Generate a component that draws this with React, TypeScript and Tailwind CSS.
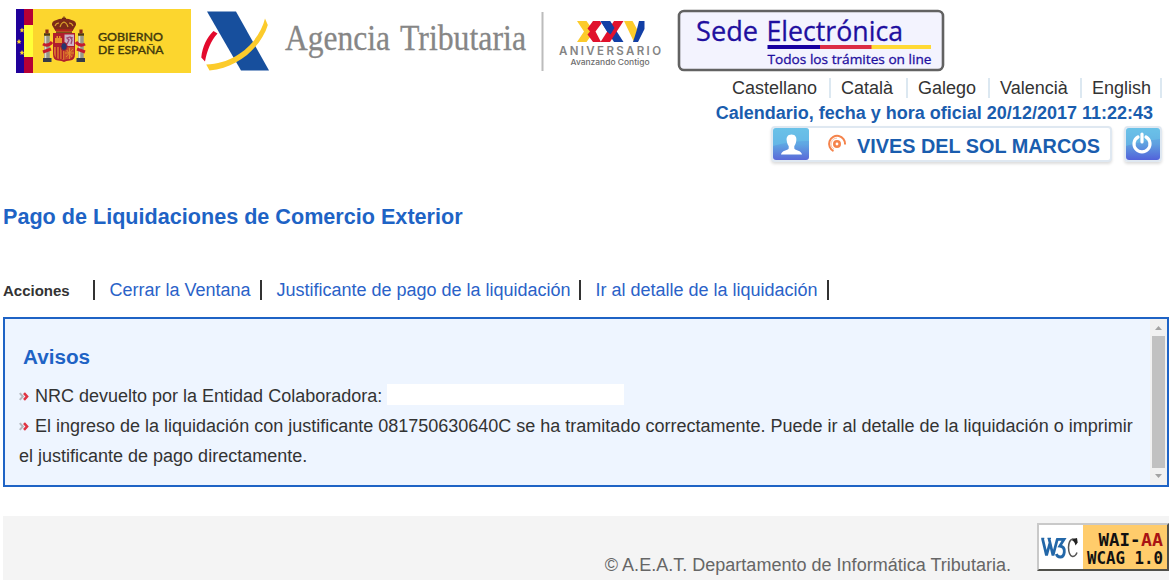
import React from "react";

function GobiernoLogo() {
  return (
    <svg className="block h-16 w-[175px]" viewBox="0 0 175 64">
      <rect width="175" height="64" fill="#fcd62e" />
      <rect width="8" height="64" fill="#20009a" />
      <rect x="8" width="9" height="64" fill="#b50035" />
      <rect x="8" y="16" width="9" height="32" fill="#ffff38" />
      <g fill="#fcd62e">
        <path d="M6 18.500l.8 1.700 1.600.2-1.200 1.200.3 1.800-1.500-.9-1.500.9.300-1.800-1.200-1.200 1.600-.2z" />
        <path d="M3 30l.8 1.700 1.600.2-1.200 1.200.3 1.800-1.500-.9-1.500.9.300-1.800L.6 31.900l1.600-.2z" />
        <path d="M6 41l.8 1.700 1.600.2-1.200 1.200.3 1.800-1.500-.9-1.500.9.300-1.800-1.200-1.200 1.600-.2z" />
      </g>
      {/* crown */}
      <path d="M48 7.500v4M46 9.500h4" stroke="#6b2a12" strokeWidth="1.300" />
      <path d="M39.500 22l-3.500-6q-.5-4 4.500-5 4-2 7.500-1 3.500-1 7.500 1 5 1 4.500 5l-3.500 6z" fill="#7d2a18" />
      <path d="M39 17q1-3 4-3M44 18q1-4 4-5 3 1 4 5M53 14q3 0 4 3" fill="none" stroke="#d9a32c" strokeWidth="1.100" />
      <path d="M40 21.500h16" stroke="#b4231f" strokeWidth="2.400" />
      <path d="M40 23.300h16" stroke="#5b3013" strokeWidth="1" />
      {/* columns */}
      <g>
        <path d="M31 27v22M65 27v22" stroke="#98988a" strokeWidth="5.500" />
        <path d="M29.500 27v22M63.500 27v22" stroke="#dcdccf" strokeWidth="1.500" />
        <path d="M28 25.500h6M62 25.500h6" stroke="#4b3a18" strokeWidth="2.400" />
        <path d="M31 20.500v4M65 20.500v4" stroke="#8e2c18" strokeWidth="3.200" />
        <path d="M27 51h8.500M60.500 51h8.500" stroke="#353b48" strokeWidth="4" />
        <path d="M27 35q5 3 9-2M27 43l8-3M69 35q-5 3-9-2M69 43l-8-3" fill="none" stroke="#c51c2d" strokeWidth="3" />
      </g>
      {/* shield */}
      <path d="M37 24h22v21q0 6-5 6.500-4 0-6 1.500-2-1.500-6-1.500-5-.5-5-6.500z" fill="#b01e2c" />
      <path d="M48.500 25.500h9.500V37h-9.500z" fill="#cdb2c6" />
      <path d="M51 35l2-4-2-2 3-1 2 3-1 4M54 28l3 1" fill="none" stroke="#9b4570" strokeWidth="1.300" />
      <path d="M39 34v-5h1.500v-2h1.500v2h1v-2h1.500v2H46v5z" fill="#e8952c" />
      <path d="M38 38h10v13q-2-1-5-1-5-1-5-6z" fill="#d9762c" />
      <path d="M40.500 38v11M43.500 38v12M46.300 38v12" stroke="#b01e2c" strokeWidth="1.400" />
      <path d="M48 38h10v6q0 5-5 6-3 0-5 1z" fill="#c8492b" />
      <path d="M50 40l6 8M57 40l-7 8M53.500 39v11M49 44h9" stroke="#e08b2c" strokeWidth="1" />
      <ellipse cx="48" cy="37.500" rx="3.200" ry="4" fill="#28356c" stroke="#b01e2c" />
      <g
        fill="#40380d"
        fontFamily="Lato, sans-serif"
        fontSize="12"
        fontWeight="400"
        stroke="#40380d"
        strokeWidth=".4"
      >
        <text x="82" y="32" textLength="65" lengthAdjust="spacingAndGlyphs">GOBIERNO</text>
        <text x="82" y="45" textLength="65.500" lengthAdjust="spacingAndGlyphs">DE ESPAÑA</text>
      </g>
    </svg>
  );
}

function AgenciaLogo() {
  return (
    <svg className="block h-[76px] w-[344px] overflow-visible" viewBox="200 0 344 76">
      <path d="M207 11.500h29L269 70.500h-28z" fill="#174f9d" />
      <path d="M213.500 31l4 2.500c-6.500 7-10.500 17-12.500 28l-3.700-4c1-11 5.700-20 12.200-26.500z" fill="#e30a2d" />
      <path d="M265 18.500l2.800 6.500c-6 20-28 43-58.300 45.500l-3.300-6c31.800-1 53.800-25 58.800-46z" fill="#fccb2b" />
      <g
        fontFamily="Liberation Serif, serif"
        fontSize="35.500"
        fill="#868686"
        stroke="#868686"
        strokeWidth=".3"
      >
        <text x="285" y="49.500" textLength="105" lengthAdjust="spacingAndGlyphs">Agencia</text>
        <text x="400" y="49.500" textLength="126" lengthAdjust="spacingAndGlyphs">Tributaria</text>
      </g>
      <rect x="541.500" y="12" width="2" height="59" fill="#bcbcbc" />
    </svg>
  );
}

function AniversarioLogo() {
  return (
    <svg className="block h-[72px] w-[108px]" viewBox="556 0 108 72">
      <path d="M577 21h9.500l7.500 10.500-7.500 10.500H577l7-10.500z" fill="#fccb2b" />
      <path d="M600 21h-7l-5.500 7.500 2.500 3-2.500 3L593 42h8l-5.500-10.500 6-8z" fill="#e0122d" />
      <path d="M600.500 21h9.500L623.500 42H614z" fill="#123fa5" />
      <path d="M623.500 21H614L600.500 42h9.500z" fill="#e0122d" />
      <path d="M600.500 21h9.500l4.500 7-4 6.500-3.500-3z" fill="#123fa5" />
      <path d="M624 21h8.500l5 9-3.500 12z" fill="#fccb2b" />
      <path d="M636.500 31l2.500-10h5.500v8L638 42h-5z" fill="#123fa5" />
      <text
        x="559"
        y="55.300"
        textLength="102"
        lengthAdjust="spacing"
        fontFamily="Inter, sans-serif"
        fontSize="11.500"
        fontWeight="600"
        fill="#848484"
      >
        ANIVERSARIO
      </text>
      <text
        x="570.500"
        y="65"
        textLength="79"
        lengthAdjust="spacingAndGlyphs"
        fontFamily="Inter, sans-serif"
        fontSize="7.500"
        fontWeight="500"
        fill="#6d6d6d"
      >
        Avanzando Contigo
      </text>
    </svg>
  );
}

function SedeLogo() {
  return (
    <svg className="block h-16 w-[268px]" viewBox="677 9 268 64">
      <rect x="679" y="11" width="264" height="59" rx="5" fill="#f3f3fe" stroke="#626262" strokeWidth="2.600" />
      <g fontFamily="Open Sans, Noto Sans, sans-serif" fill="#1f0f9f" stroke="#1f0f9f">
        <text x="696" y="41" fontSize="26.500" strokeWidth=".3" textLength="62" lengthAdjust="spacingAndGlyphs">
          Sede
        </text>
        <text x="766.500" y="41" fontSize="26.500" strokeWidth=".3" textLength="136.500" lengthAdjust="spacingAndGlyphs">
          Electrónica
        </text>
        <text x="767.500" y="64" fontSize="13.500" strokeWidth=".3" textLength="164" lengthAdjust="spacingAndGlyphs">
          Todos los trámites on line
        </text>
      </g>
      <rect x="767.500" y="45" width="53" height="4" fill="#1600a0" />
      <rect x="820" y="45" width="52" height="4" fill="#dc2d45" />
      <rect x="871.500" y="45" width="59.500" height="4" fill="#ffd935" />
    </svg>
  );
}

function UserIcon() {
  return (
    <svg className="block h-8 w-9" viewBox="0 0 36 32">
      <defs>
        <linearGradient id="user-bg" x1="0" y1="0" x2="0" y2="1">
          <stop offset="0" stopColor="#68b9e6" />
          <stop offset=".5" stopColor="#5fa7e3" />
          <stop offset="1" stopColor="#5a69d8" />
        </linearGradient>
      </defs>
      <rect width="36" height="32" rx="3" fill="url(#user-bg)" />
      <path d="M0 3q0-3 3-3h30q3 0 3 3v10Q18 13 0 18z" fill="#6fd0ea" opacity=".4" />
      <path
        d="M18.500 6.500c-4 0-5.300 3-4.800 6 .3 3 1.300 4.500 2 5.500v2.500c-1 2-7.200 2-7.700 6h21c-.5-4-6.700-4-7.700-6V18c.7-1 1.700-2.500 2-5.500.5-3-.8-6-4.800-6z"
        fill="#fff"
      />
    </svg>
  );
}

function PowerIcon() {
  return (
    <svg className="block h-8 w-[34px]" viewBox="0 0 34 32">
      <defs>
        <linearGradient id="power-bg" x1="0" y1="0" x2="0" y2="1">
          <stop offset="0" stopColor="#68b9e6" />
          <stop offset=".5" stopColor="#5fa0e0" />
          <stop offset="1" stopColor="#5262da" />
        </linearGradient>
      </defs>
      <rect width="34" height="32" rx="3" fill="url(#power-bg)" />
      <path d="M0 3q0-3 3-3h28q3 0 3 3v8Q16 13 0 18z" fill="#6fd0ea" opacity=".4" />
      <path d="M12 9a8 8 0 1 0 8 0" fill="none" stroke="#fff" strokeWidth="3.200" strokeLinecap="round" />
      <path d="M16 6v8" stroke="#fff" strokeWidth="3.200" strokeLinecap="round" />
    </svg>
  );
}

function CertIcon() {
  return (
    <svg className="block h-5 w-5" viewBox="0 0 20 20" fill="none" stroke="#f5834b">
      <circle cx="10" cy="10" r="2.700" strokeWidth="2.600" />
      <path d="M6.500 17A8 8 0 1 1 18.100 10.500" strokeWidth="2" />
      <path d="M7 15a5.800 5.800 0 0 1 3-10.800" strokeWidth="1" opacity=".5" />
    </svg>
  );
}

function Bullet() {
  return (
    <svg className="mr-[6px] inline-block h-[9px] w-[10px] align-[1px]" viewBox="0 0 10 9" fill="none">
      <path d="M.8 1.200L3.800 4.500.8 7.800" stroke="#b3b7be" strokeWidth="2" />
      <path d="M5 1.200L8 4.500 5 7.800" stroke="#df3442" strokeWidth="2.600" />
    </svg>
  );
}

function WaiBadge() {
  return (
    <svg className="block h-12 w-[132px]" viewBox="0 0 132 48">
      <rect width="132" height="48" fill="#c9c9c9" />
      <path d="M132 0v48H0l2-2h128V2z" fill="#50504a" />
      <rect x="2" y="2" width="44" height="44" fill="#fff" />
      <rect x="46" y="2" width="84" height="44" fill="#ffcc6b" />
      <path d="M5.500 15.500l4 17 3.300-12M12 15.500l4 17L20.500 15.500" fill="none" stroke="#2367a8" strokeWidth="2.800" />
      <path d="M4.300 15.300h3M10.500 15.300h3.500" stroke="#2367a8" strokeWidth="1.200" />
      <path d="M19.500 16.400h7.500l-4.200 6.600q5 .5 4.500 6-.5 5-4 5-3 0-4-3" fill="none" stroke="#2367a8" strokeWidth="2.800" />
      <path d="M39.500 20q-1-4-3.800-4-4 1-4.200 8.500.2 8 4 9 3 0 4.500-4" fill="none" stroke="#555" strokeWidth="1.500" />
      <path d="M40 15l.7 4.500-2.200 3q-1-4.500-3.500-5 1.500-2.500 5-2.500z" fill="#222" />
      <g fontFamily="DejaVu Sans Mono, monospace" fontSize="17" fontWeight="700">
        <text x="61.500" y="22.500" fill="#111" textLength="42" lengthAdjust="spacingAndGlyphs">WAI-</text>
        <text x="104" y="22.500" fill="#a91414" textLength="22" lengthAdjust="spacingAndGlyphs">AA</text>
        <text x="50" y="41" fill="#111" textLength="76" lengthAdjust="spacingAndGlyphs">WCAG 1.0</text>
      </g>
    </svg>
  );
}

const languages = [
  { name: "Castellano", box: "w-[99px]" },
  { name: "Català", box: "w-[77px] pl-[10px]" },
  { name: "Galego", box: "w-[82px] pl-[10px]" },
  { name: "Valencià", box: "w-[92px] pl-[10px]" },
  { name: "English", box: "w-[80px] pl-[10px]" },
];

const actions = [
  { name: "Cerrar la Ventana", box: "w-[167px]" },
  { name: "Justificante de pago de la liquidación", box: "w-[319px]" },
  { name: "Ir al detalle de la liquidación", box: "w-[248px]" },
];

export default function App() {
  return (
    <div className="flex h-[580px] w-[1176px] flex-col overflow-hidden bg-white font-['Liberation_Sans',Arial,sans-serif] text-[18px] text-[#333]">
      <header className="flex h-[78px] shrink-0 items-start pl-4">
        <div className="pt-[9px]">
          <GobiernoLogo />
        </div>
        <div className="pl-[9px]">
          <AgenciaLogo />
        </div>
        <div className="pl-3">
          <AniversarioLogo />
        </div>
        <div className="pl-[13px] pt-[9px]">
          <SedeLogo />
        </div>
      </header>

      <nav className="flex h-5 shrink-0 justify-end pr-[14px]">
        {languages.map((l) => (
          <a key={l.name} className={`${l.box} shrink-0 whitespace-nowrap border-r-2 border-[#dce8f1] leading-5`}>
            {l.name}
          </a>
        ))}
      </nav>

      <div className="h-[27px] shrink-0 whitespace-nowrap pr-[23px] text-right font-bold leading-[30px] text-[#1a5dae]">
        Calendario, fecha y hora oficial 20/12/2017 11:22:43
      </div>

      <div className="flex h-[37px] shrink-0 justify-end gap-3 pr-[14px] pt-px">
        <div className="flex h-9 w-[341px] items-center rounded border-2 border-[#dfe8f1] bg-white shadow-[0_2px_3px_#ddd]">
          <UserIcon />
          <div className="pl-[18px]">
            <CertIcon />
          </div>
          <span className="whitespace-nowrap pl-[10px] pt-1 text-[19.850px] font-bold leading-8 text-[#1a5dae]">
            VIVES DEL SOL MARCOS
          </span>
        </div>
        <div className="flex h-9 w-[38px] items-center justify-center rounded border-2 border-[#dfe8f1] shadow-[0_2px_3px_#ddd]">
          <PowerIcon />
        </div>
      </div>

      <h1 className="mt-[43px] h-6 shrink-0 whitespace-nowrap pl-[3px] text-[21.600px] font-bold leading-6 text-[#1e63c5]">
        Pago de Liquidaciones de Comercio Exterior
      </h1>

      <div className="mt-[51px] flex h-5 shrink-0 pl-[3px]">
        <strong className="w-[92px] shrink-0 border-r-2 border-[#333] text-[15px] leading-[22px]">Acciones</strong>
        {actions.map((a) => (
          <a key={a.name} className={`${a.box} shrink-0 whitespace-nowrap border-r-2 border-[#333] pl-[14.400px] leading-5 text-[#2a62c8]`}>
            {a.name}
          </a>
        ))}
      </div>

      <section className="ml-[3px] mt-[17px] flex h-[170px] w-[1166px] shrink-0 border-2 border-[#1e63c5] bg-[#eef5ff]">
        <div className="min-w-0 flex-1 pl-[14px] pt-[26px]">
          <h2 className="mb-3 pl-1 text-[20.700px] font-bold leading-6 text-[#1e63c5]">Avisos</h2>
          <p className="flex items-center whitespace-nowrap leading-[30px]">
            <Bullet />
            <span>NRC devuelto por la Entidad Colaboradora:</span>
            <span className="mb-[3px] ml-[5px] inline-block h-[21px] w-[237px] bg-white" />
          </p>
          <p className="whitespace-nowrap leading-[30px]">
            <Bullet />
            El ingreso de la liquidación con justificante 081750630640C se ha tramitado correctamente. Puede ir al detalle de la liquidación o imprimir
            <br />
            el justificante de pago directamente.
          </p>
        </div>
        <div className="flex w-[17px] shrink-0 flex-col items-center bg-[#f1f1f1]">
          <svg className="block h-[17px] w-[17px]" viewBox="0 0 17 17">
            <path d="M5 11h7L8.500 7z" fill="#a3a3a3" />
          </svg>
          <div className="w-[13px] flex-1 bg-[#c1c1c1]" />
          <svg className="block h-[17px] w-[17px]" viewBox="0 0 17 17">
            <path d="M5 6h7l-3.500 4z" fill="#a3a3a3" />
          </svg>
        </div>
      </section>

      <footer className="ml-[3px] mt-[29px] flex h-16 w-[1166px] shrink-0 justify-end bg-[#f4f4f4]">
        <span className="whitespace-nowrap pr-[26px] pt-[39px] leading-5 tracking-[0.015px] text-[#666]">
          © A.E.A.T. Departamento de Informática Tributaria.
        </span>
        <div className="pt-[7px]">
          <WaiBadge />
        </div>
      </footer>
    </div>
  );
}
